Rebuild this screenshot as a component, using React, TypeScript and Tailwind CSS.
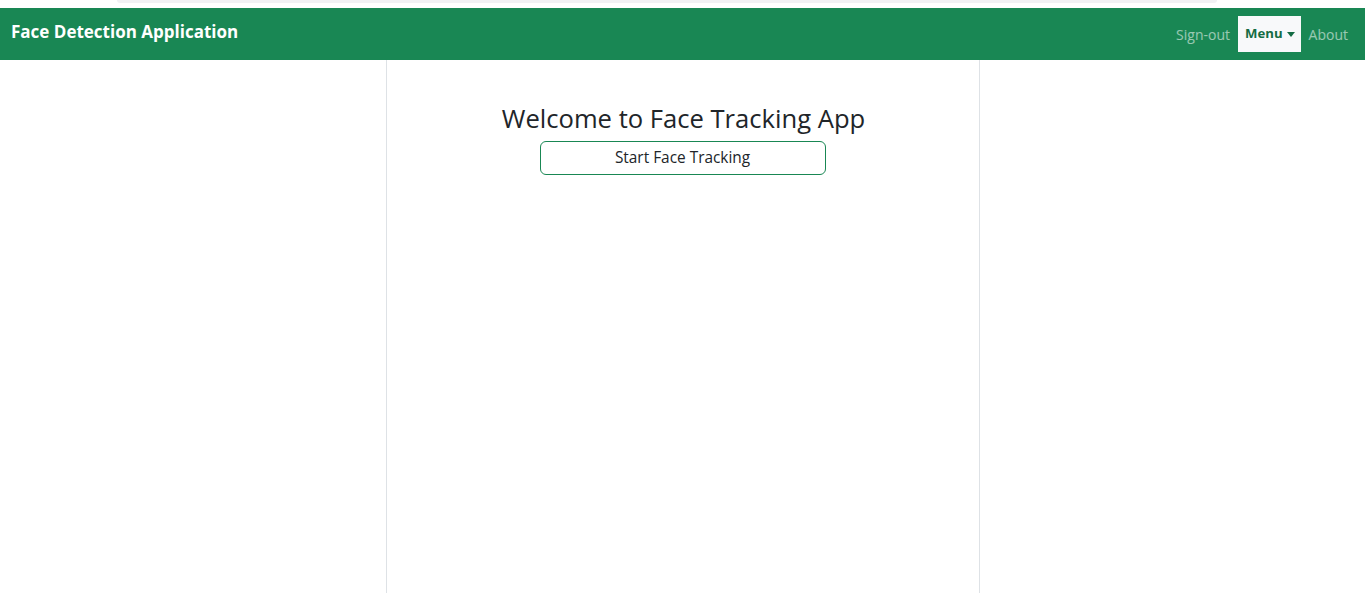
import React from "react";

export default function App() {
  const font = { fontFamily: '"Comic Sans MS", "Open Sans", sans-serif' };
  return (
    <div className="min-h-[593px] bg-white flex flex-col" style={font}>
      <div className="h-[8px] bg-white relative">
        <div className="ml-[117px] w-[1100px] h-[3px] bg-[#f1f1f4] rounded-b-[3px]" />
      </div>
      <nav className="h-[52px] bg-[#198754] flex items-center justify-between pl-[11px] pr-[17px]">
        <span className="text-white text-[17px] font-bold pb-[4px]">Face Detection Application</span>
        <div className="flex items-center gap-[8px] text-[14px]">
          <span className="text-white/55">Sign-out</span>
          <button className="h-[36px] pl-[7px] pr-[6px] bg-[#f8f9fa] text-[#146c43] font-bold flex items-center gap-[4px] text-[13.2px]">
            Menu
            <svg width="8" height="5" viewBox="0 0 8 5"><path d="M0 0h8L4 5z" fill="#146c43" /></svg>
          </button>
          <span className="text-white/55">About</span>
        </div>
      </nav>
      <div className="flex-1 flex justify-center">
        <div className="w-[594px] border-x border-[#dee2e6] flex flex-col items-center pt-[42px] min-h-[533px]">
          <h1 className="text-[25.6px] text-[#212529] leading-[34px] translate-x-[1px]">Welcome to Face Tracking App</h1>
          <button className="mt-[5px] w-[286px] h-[34px] border border-[#198754] rounded-[6px] text-[15.4px] text-[#212529]">
            Start Face Tracking
          </button>
        </div>
      </div>
    </div>
  );
}
